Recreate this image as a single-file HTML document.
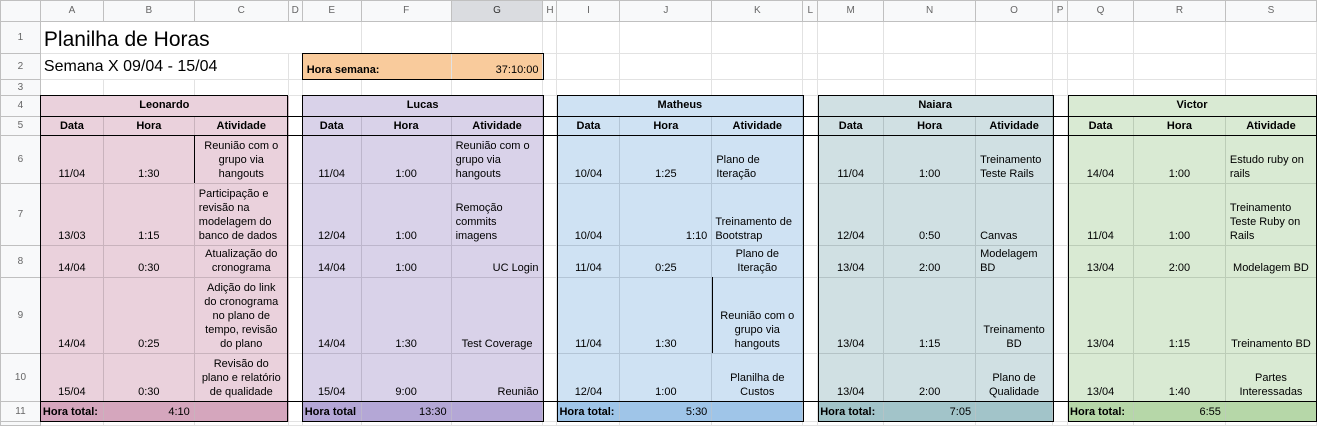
<!DOCTYPE html>
<html><head><meta charset="utf-8"><style>
*{box-sizing:border-box;margin:0;padding:0}
body{width:1317px;height:423px;overflow:hidden;background:#fff;font-family:"Liberation Sans",Arial,sans-serif;font-size:11px;color:#000;position:relative}
table{border-collapse:collapse;table-layout:fixed;position:absolute;left:0;top:0}
td{border:1px solid #e2e2e2;vertical-align:bottom;padding:0 4px 2px;line-height:14px;overflow:hidden;white-space:normal;text-align:center}
tr.h td{background:#f8f9fa;color:#666;font-size:10px;vertical-align:middle;border-color:#c0c0c0;padding:0}
td.rh{background:#f8f9fa;color:#666;font-size:10px;vertical-align:middle;border-color:#c0c0c0;padding:0}
tr.h td.sel{background:#dadce0;color:#333}
.l{text-align:left}.r{text-align:right}.b{font-weight:bold}
.p1{background:#ead1dc;border-color:#c9b3bd}.p2{background:#d5a6bd;border-color:#c9b3bd}
.u1{background:#d9d2e9;border-color:#bdb6cc}.u2{background:#b4a7d6;border-color:#bdb6cc}
.m1{background:#cfe2f3;border-color:#b3c5d6}.m2{background:#9fc5e8;border-color:#b3c5d6}
.n1{background:#d0e0e3;border-color:#b4c3c6}.n2{background:#a2c4c9;border-color:#b4c3c6}
.v1{background:#d9ead3;border-color:#bccdb7}.v2{background:#b6d7a8;border-color:#bccdb7}
.o{background:#f9cb9c}
.box{position:absolute;border:1px solid #000;pointer-events:none}
.ln{position:absolute;background:#000;height:1px}
.vl{position:absolute;background:#000;width:1px}
</style></head><body>
<table>
<colgroup>
<col style="width:40px"><col style="width:63px"><col style="width:91px"><col style="width:94px"><col style="width:14px">
<col style="width:59px"><col style="width:90px"><col style="width:92px"><col style="width:14px">
<col style="width:63px"><col style="width:92px"><col style="width:91px"><col style="width:15px">
<col style="width:66px"><col style="width:92px"><col style="width:77px"><col style="width:15px">
<col style="width:66px"><col style="width:92px"><col style="width:91px">
</colgroup>
<tr class="h" style="height:21px"><td></td><td>A</td><td>B</td><td>C</td><td>D</td><td>E</td><td>F</td><td class="sel">G</td><td>H</td><td>I</td><td>J</td><td>K</td><td>L</td><td>M</td><td>N</td><td>O</td><td>P</td><td>Q</td><td>R</td><td>S</td></tr>
<tr style="height:32px"><td class="rh">1</td><td colspan="4" class="l" style="font-size:21px;line-height:26px;white-space:nowrap;border-right:0;padding:0 3px 0">Planilha de Horas</td><td style="border-left:0"></td><td></td><td></td><td></td><td></td><td></td><td></td><td></td><td></td><td></td><td></td><td></td><td></td><td></td><td></td></tr>
<tr style="height:26px"><td class="rh">2</td><td colspan="3" class="l" style="font-size:16px;line-height:20px;white-space:nowrap;padding:0 3px 2px">Semana X 09/04 - 15/04</td><td></td><td colspan="2" class="o l b" style="white-space:nowrap">Hora semana:</td><td class="o r">37:10:00</td><td></td><td></td><td></td><td></td><td></td><td></td><td></td><td></td><td></td><td></td><td></td><td></td></tr>
<tr style="height:16px"><td class="rh">3</td><td></td><td></td><td></td><td></td><td></td><td></td><td></td><td></td><td></td><td></td><td></td><td></td><td></td><td></td><td></td><td></td><td></td><td></td><td></td></tr>
<tr style="height:21px" class="b"><td class="rh" style="font-weight:normal">4</td><td colspan="3" class="p1" style="vertical-align:middle">Leonardo</td><td></td><td colspan="3" class="u1" style="vertical-align:middle">Lucas</td><td></td><td colspan="3" class="m1" style="vertical-align:middle">Matheus</td><td></td><td colspan="3" class="n1" style="vertical-align:middle">Naiara</td><td></td><td colspan="3" class="v1" style="vertical-align:middle">Victor</td></tr>
<tr style="height:19px" class="b"><td class="rh" style="font-weight:normal">5</td><td class="p1">Data</td><td class="p1">Hora</td><td class="p1">Atividade</td><td></td><td class="u1">Data</td><td class="u1">Hora</td><td class="u1">Atividade</td><td></td><td class="m1">Data</td><td class="m1">Hora</td><td class="m1">Atividade</td><td></td><td class="n1">Data</td><td class="n1">Hora</td><td class="n1">Atividade</td><td></td><td class="v1">Data</td><td class="v1">Hora</td><td class="v1">Atividade</td></tr>
<tr style="height:48px"><td class="rh">6</td><td class="p1">11/04</td><td class="p1">1:30</td><td class="p1">Reunião com o grupo via hangouts</td><td></td><td class="u1">11/04</td><td class="u1">1:00</td><td class="u1 l">Reunião com o grupo via hangouts</td><td></td><td class="m1">10/04</td><td class="m1">1:25</td><td class="m1 l">Plano de Iteração</td><td></td><td class="n1">11/04</td><td class="n1">1:00</td><td class="n1 l">Treinamento Teste Rails</td><td></td><td class="v1">14/04</td><td class="v1">1:00</td><td class="v1 l">Estudo ruby on rails</td></tr>
<tr style="height:62px"><td class="rh">7</td><td class="p1">13/03</td><td class="p1">1:15</td><td class="p1 l">Participação e revisão na modelagem do banco de dados</td><td></td><td class="u1">12/04</td><td class="u1">1:00</td><td class="u1 l">Remoção commits imagens</td><td></td><td class="m1">10/04</td><td class="m1 r">1:10</td><td class="m1 l" style="padding-left:3px;padding-right:2px">Treinamento de Bootstrap</td><td></td><td class="n1">12/04</td><td class="n1">0:50</td><td class="n1 l">Canvas</td><td></td><td class="v1">11/04</td><td class="v1">1:00</td><td class="v1 l">Treinamento Teste Ruby on Rails</td></tr>
<tr style="height:32px"><td class="rh">8</td><td class="p1">14/04</td><td class="p1">0:30</td><td class="p1">Atualização do cronograma</td><td></td><td class="u1">14/04</td><td class="u1">1:00</td><td class="u1 r">UC Login</td><td></td><td class="m1">11/04</td><td class="m1">0:25</td><td class="m1">Plano de Iteração</td><td></td><td class="n1">13/04</td><td class="n1">2:00</td><td class="n1 l">Modelagem BD</td><td></td><td class="v1">13/04</td><td class="v1">2:00</td><td class="v1">Modelagem BD</td></tr>
<tr style="height:76px"><td class="rh">9</td><td class="p1">14/04</td><td class="p1">0:25</td><td class="p1" style="padding:0 6px 2px">Adição do link do cronograma no plano de tempo, revisão do plano</td><td></td><td class="u1">14/04</td><td class="u1">1:30</td><td class="u1">Test Coverage</td><td></td><td class="m1">11/04</td><td class="m1">1:30</td><td class="m1">Reunião com o grupo via hangouts</td><td></td><td class="n1">13/04</td><td class="n1">1:15</td><td class="n1">Treinamento BD</td><td></td><td class="v1">13/04</td><td class="v1">1:15</td><td class="v1" style="white-space:nowrap;padding:0 0 2px">Treinamento BD</td></tr>
<tr style="height:48px"><td class="rh">10</td><td class="p1">15/04</td><td class="p1">0:30</td><td class="p1" style="padding:0 5px 2px">Revisão do plano e relatório de qualidade</td><td></td><td class="u1">15/04</td><td class="u1">9:00</td><td class="u1 r">Reunião</td><td></td><td class="m1">12/04</td><td class="m1">1:00</td><td class="m1">Planilha de Custos</td><td></td><td class="n1">13/04</td><td class="n1">2:00</td><td class="n1">Plano de Qualidade</td><td></td><td class="v1">13/04</td><td class="v1">1:40</td><td class="v1">Partes Interessadas</td></tr>
<tr style="height:20px" ><td class="rh">11</td><td class="p2 l b" style="white-space:nowrap;padding-left:2px">Hora total:</td><td class="p2 r">4:10</td><td class="p2"></td><td></td><td class="u2 l b" style="white-space:nowrap;padding-left:2px">Hora total</td><td class="u2 r">13:30</td><td class="u2"></td><td></td><td class="m2 l b" style="white-space:nowrap;padding-left:2px">Hora total:</td><td class="m2 r">5:30</td><td class="m2"></td><td></td><td class="n2 l b" style="white-space:nowrap;padding-left:2px">Hora total:</td><td class="n2 r">7:05</td><td class="n2"></td><td></td><td class="v2 l b" style="white-space:nowrap;padding-left:2px">Hora total:</td><td class="v2 r">6:55</td><td class="v2"></td></tr>
<tr style="height:4px"><td class="rh"></td><td></td><td></td><td></td><td></td><td></td><td></td><td></td><td></td><td></td><td></td><td></td><td></td><td></td><td></td><td></td><td></td><td></td><td></td><td></td></tr>
</table>
<div class="box" style="left:302px;top:53px;width:242px;height:27px"></div>
<div class="box" style="left:40px;top:95px;width:248px;height:327px"></div>
<div class="box" style="left:302px;top:95px;width:242px;height:327px"></div>
<div class="box" style="left:557px;top:95px;width:247px;height:327px"></div>
<div class="box" style="left:818px;top:95px;width:236px;height:327px"></div>
<div class="box" style="left:1068px;top:95px;width:249px;height:327px"></div>
<div class="ln" style="left:40px;top:116px;width:1277px"></div>
<div class="ln" style="left:40px;top:135px;width:1277px"></div>
<div class="ln" style="left:40px;top:401px;width:1277px"></div>
<div class="vl" style="left:194px;top:135px;height:48px"></div>
<div class="vl" style="left:712px;top:277px;height:76px"></div>
</body></html>
